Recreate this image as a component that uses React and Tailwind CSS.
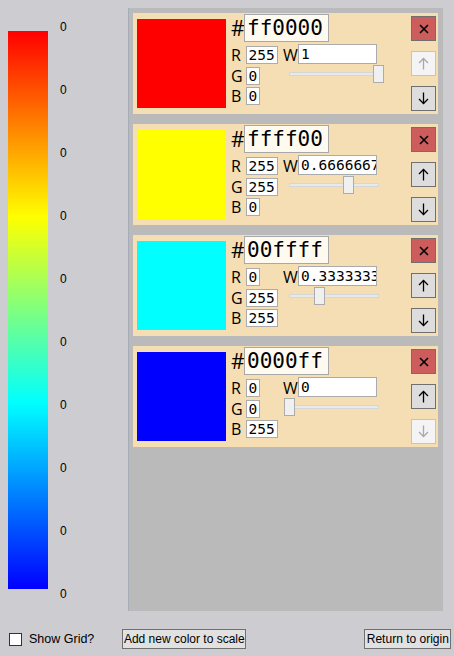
import React from "react";

const colors = [
  { hex: "ff0000", css: "#ff0000", r: "255", g: "0", b: "0", w: "1", wv: 1, upDis: true, downDis: false },
  { hex: "ffff00", css: "#ffff00", r: "255", g: "255", b: "0", w: "0.6666667", wv: 0.6666667, upDis: false, downDis: false },
  { hex: "00ffff", css: "#00ffff", r: "0", g: "255", b: "255", w: "0.3333333", wv: 0.3333333, upDis: false, downDis: false },
  { hex: "0000ff", css: "#0000ff", r: "0", g: "0", b: "255", w: "0", wv: 0, upDis: false, downDis: true },
];

function Arrow({ up, disabled }) {
  const c = disabled ? "#a8a8a8" : "#000";
  return (
    <svg width="11" height="13" viewBox="0 0 11 13">
      {up ? (
        <g stroke={c} strokeWidth="1.3" fill="none">
          <path d="M5.5 1.5 V12.5" />
          <path d="M1 6 L5.5 1.5 L10 6" />
        </g>
      ) : (
        <g stroke={c} strokeWidth="1.3" fill="none">
          <path d="M5.5 0.5 V11.5" />
          <path d="M1 7 L5.5 11.5 L10 7" />
        </g>
      )}
    </svg>
  );
}

function Btn({ children, disabled, danger }) {
  const cls = danger
    ? "bg-[#cd5c5c] border-[#707070]"
    : disabled
    ? "bg-[#f4f4f4] border-[#c4c4c4]"
    : "bg-[#dddddd] border-[#707070]";
  return (
    <div className={`w-[25px] h-[25px] border flex items-center justify-center ${cls}`}>
      {children}
    </div>
  );
}

function Field({ label, value }) {
  return (
    <div className="flex items-center h-[18px]">
      <span className="w-[14.5px] text-[16px] leading-[18px] font-['Open_Sans',sans-serif] text-black">{label}</span>
      <div className="h-[18px] border border-[#ababab] bg-white px-[2px] text-[14.5px] leading-[16px] font-['DejaVu_Sans_Mono',monospace] text-black">
        {value}
      </div>
    </div>
  );
}

function Card({ c }) {
  return (
    <div className="flex w-[305px] h-[101px] bg-[#f5deb3] mb-[10px] shrink-0">
      <div className="w-[89px] h-[89px] ml-[4px] mt-[6px] shrink-0" style={{ backgroundColor: c.css }} />
      <div className="flex flex-col ml-[5px] mt-[1px]">
        <div className="flex items-center h-[28px]">
          <span className="w-[13px] text-[21px] leading-[28px] font-['Open_Sans',sans-serif] text-black">#</span>
          <div className="w-[85px] h-[28px] border border-[#a8a8a8] bg-[#fffaf0] px-[2px] text-[21px] leading-[26px] font-['DejaVu_Sans_Mono',monospace] text-black">
            {c.hex}
          </div>
        </div>
        <div className="flex mt-[2px]">
          <div className="flex flex-col gap-[2.5px] mt-[2px] w-[52px]">
            <Field label="R" value={c.r} />
            <Field label="G" value={c.g} />
            <Field label="B" value={c.b} />
          </div>
          <div className="flex flex-col">
            <div className="flex items-center h-[20px]">
              <span className="w-[15px] text-[16px] leading-[20px] font-['Open_Sans',sans-serif] text-black pt-[1px]">W</span>
              <div className="w-[79px] h-[20px] border border-[#ababab] bg-white pl-[2px] overflow-hidden whitespace-nowrap text-[14.5px] leading-[18px] font-['DejaVu_Sans_Mono',monospace] text-black">
                {c.w}
              </div>
            </div>
            <div className="relative w-[100px] h-[18px] ml-[1px] mt-[1px]">
              <div className="absolute left-[5px] right-[5px] top-[7px] h-[4px] bg-[#e7eaea] border border-[#d6d6d6]" />
              <div
                className="absolute top-0 w-[11px] h-[18px] bg-[#f0f0f0] border border-[#acacac]"
                style={{ left: `${Math.round(c.wv * 89)}px` }}
              />
            </div>
          </div>
        </div>
      </div>
      <div className="flex flex-col gap-[10px] ml-auto mr-[2px] mt-[3px]">
        <Btn danger>
          <svg width="10" height="10" viewBox="0 0 10 10">
            <path d="M1 1 L9 9 M9 1 L1 9" stroke="#000" strokeWidth="1.6" />
          </svg>
        </Btn>
        <Btn disabled={c.upDis}>
          <Arrow up disabled={c.upDis} />
        </Btn>
        <Btn disabled={c.downDis}>
          <Arrow disabled={c.downDis} />
        </Btn>
      </div>
    </div>
  );
}

export default function App() {
  return (
    <div className="w-[454px] h-[656px] bg-[#cdccd1] overflow-hidden font-['Liberation_Sans',sans-serif]">
      <div className="flex pt-[8px]">
        <div className="flex w-[128px] shrink-0">
          <div className="ml-[8px] mt-[23px] w-[40px] h-[558px] bg-[linear-gradient(to_bottom,#ff0000_0%,#ffff00_33.33%,#00ffff_66.67%,#0000ff_100%)]" />
          <div className="flex flex-col justify-between ml-[12px] mt-[11px] h-[583px]">
            {Array.from({ length: 10 }).map((_, i) => (
              <span key={i} className="text-[12px] leading-[16px] text-black">0</span>
            ))}
          </div>
        </div>
        <div className="w-[315px] h-[603px] bg-[#bababa] border-l border-[#a6acb8] pl-[4px] pt-[5px] flex flex-col">
          {colors.map((c) => (
            <Card key={c.hex} c={c} />
          ))}
        </div>
      </div>
      <div className="flex items-center h-[20px] mt-[18px] text-[12px] text-black">
        <div className="w-[13px] h-[13px] ml-[9px] border border-[#333333] bg-white shrink-0" />
        <span className="ml-[7px] leading-[20px] whitespace-nowrap shrink-0 text-[12.5px]">Show Grid?</span>
        <div className="ml-[28px] h-[20px] w-[124px] shrink-0 border border-[#707070] bg-[#e1e1e1] flex items-center justify-center leading-[18px] whitespace-nowrap">
          Add new color to scale
        </div>
        <div className="ml-[118px] h-[20px] w-[87px] shrink-0 border border-[#707070] bg-[#e1e1e1] flex items-center justify-center leading-[18px] whitespace-nowrap">
          Return to origin
        </div>
      </div>
    </div>
  );
}
